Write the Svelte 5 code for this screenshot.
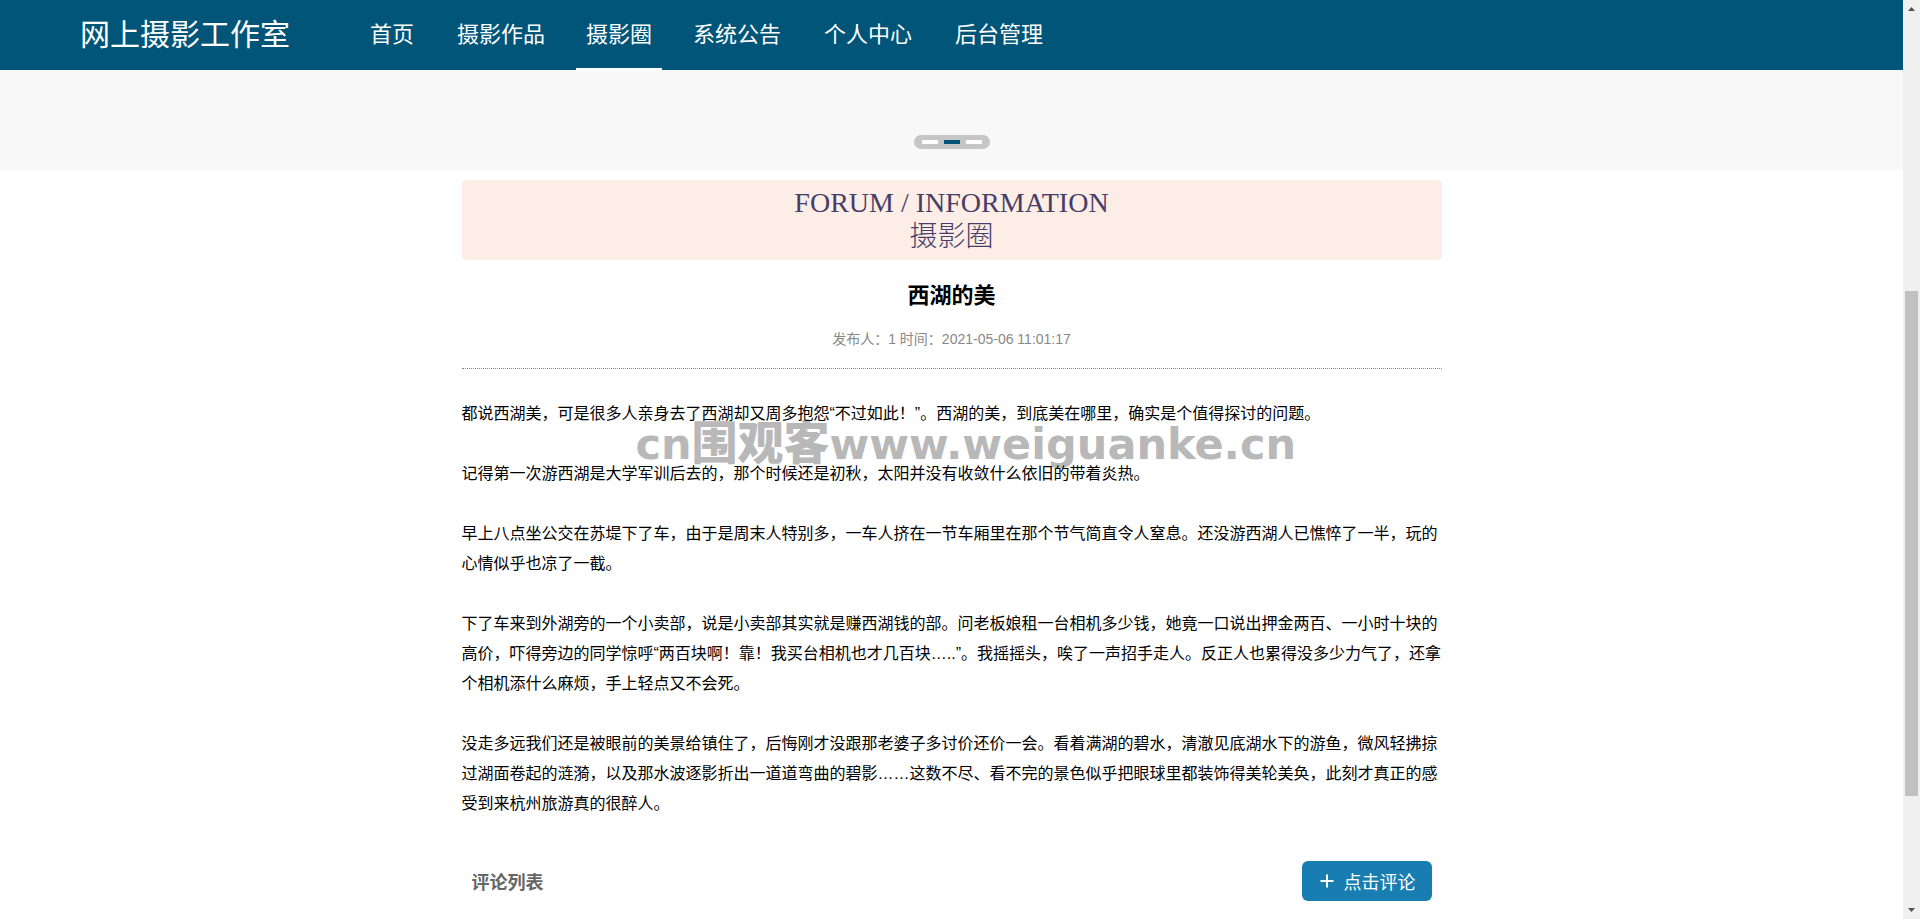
<script>
  const nav = ['首页', '摄影作品', '摄影圈', '系统公告', '个人中心', '后台管理'];
  const current = '摄影圈';
  const slides = [0, 1, 2];
  let slide = $state(1);
  const paragraphs = [
    '都说西湖美，可是很多人亲身去了西湖却又周多抱怨“不过如此！”。西湖的美，到底美在哪里，确实是个值得探讨的问题。',
    '记得第一次游西湖是大学军训后去的，那个时候还是初秋，太阳并没有收敛什么依旧的带着炎热。',
    '早上八点坐公交在苏堤下了车，由于是周末人特别多，一车人挤在一节车厢里在那个节气简直令人窒息。还没游西湖人已憔悴了一半，玩的心情似乎也凉了一截。',
    '下了车来到外湖旁的一个小卖部，说是小卖部其实就是赚西湖钱的部。问老板娘租一台相机多少钱，她竟一口说出押金两百、一小时十块的高价，吓得旁边的同学惊呼“两百块啊！靠！我买台相机也才几百块…..”。我摇摇头，唉了一声招手走人。反正人也累得没多少力气了，还拿个相机添什么麻烦，手上轻点又不会死。',
    '没走多远我们还是被眼前的美景给镇住了，后悔刚才没跟那老婆子多讨价还价一会。看着满湖的碧水，清澈见底湖水下的游鱼，微风轻拂掠过湖面卷起的涟漪，以及那水波逐影折出一道道弯曲的碧影……这数不尽、看不完的景色似乎把眼球里都装饰得美轮美奂，此刻才真正的感受到来杭州旅游真的很醉人。'
  ];
</script>

<div class="shell" lang="zh-CN">
  <div class="page">
    <header>
      <a class="brand" href="#home">网上摄影工作室</a>
      <nav>
        {#each nav as item}
          <a href="#{item}" class:active={item === current}>{item}</a>
        {/each}
      </nav>
    </header>

    <section class="carousel">
      <div class="dots">
        {#each slides as i}
          <button class:on={slide === i} aria-label="{i + 1}" onclick={() => (slide = i)}></button>
        {/each}
      </div>
    </section>

    <main>
      <div class="banner">
        <span>FORUM / INFORMATION</span>
        <span class="zh">摄影圈</span>
      </div>
      <article>
        <h1>西湖的美</h1>
        <p class="meta">发布人：1 时间：2021-05-06 11:01:17</p>
        <div class="body">
          {#each paragraphs as text}
            <p>{text}</p>
          {/each}
          <div class="watermark">cn<span>围观客</span>www.weiguanke.cn</div>
        </div>
      </article>
      <div class="comments">
        <h2>评论列表</h2>
        <button class="add">
          <svg viewBox="0 0 14 14" width="14" height="14" aria-hidden="true"><path d="M7 0.500v13M0.500 7h13" stroke="#fff" stroke-width="2" /></svg>
          点击评论
        </button>
      </div>
    </main>
  </div>

  <div class="scrollbar" aria-hidden="true">
    <svg viewBox="0 0 17 17" width="17" height="17"><path d="M5 11h7L8.500 7z" fill="#505050" /></svg>
    <div class="track"><div class="thumb"></div></div>
    <svg viewBox="0 0 17 17" width="17" height="17"><path d="M5 6h7L8.500 10z" fill="#505050" /></svg>
  </div>
</div>

<style>
  :global(body) {
    margin: 0;
    background: #fff;
  }
  .shell {
    display: flex;
    height: 100vh;
    overflow: hidden;
    font-family: "Liberation Sans", "Noto Sans CJK SC", sans-serif;
    color: #000;
  }
  .page {
    flex: 1;
    min-width: 0;
    overflow: hidden;
  }
  header {
    display: flex;
    gap: 68px;
    height: 70px;
    padding-left: 80px;
    background: #005578;
    line-height: 70px;
  }
  a {
    color: #fff;
    text-decoration: none;
    white-space: nowrap;
  }
  .brand {
    font-size: 30px;
  }
  nav {
    display: flex;
    gap: 19px;
    font-size: 22px;
  }
  nav a {
    padding: 0 12px;
  }
  nav a.active {
    position: relative;
    padding: 0 10px;
  }
  nav a.active::after {
    content: "";
    position: absolute;
    inset: auto 0 -1px;
    height: 3px;
    background: #fff;
  }
  .carousel {
    display: flex;
    justify-content: center;
    align-items: flex-end;
    height: 100px;
    padding-bottom: 21px;
    box-sizing: border-box;
    background: #f8f8f8;
  }
  .dots {
    display: flex;
    gap: 6px;
    padding: 5px 8px;
    border-radius: 7px;
    background: #c6c6c6;
  }
  .dots button {
    width: 16px;
    height: 4px;
    padding: 0;
    border: 0;
    background: #fff;
  }
  .dots button.on {
    background: #005578;
  }
  main {
    max-width: 980px;
    margin: 10px auto 0;
  }
  .banner {
    display: flex;
    flex-direction: column;
    align-items: center;
    justify-content: center;
    height: 80px;
    border-radius: 4px;
    background: #fceee6;
    color: #483d68;
    font-family: "Liberation Serif", "Noto Sans CJK SC", serif;
    font-size: 28px;
    line-height: 34px;
  }
  .zh {
    font-weight: 300;
  }
  h1 {
    margin: 20px 0 0;
    font-size: 22px;
    line-height: 32px;
    text-align: center;
  }
  .meta {
    margin: 0;
    padding: 16px 0 18px;
    border-bottom: 1px dotted #888;
    color: #888;
    font-size: 14px;
    line-height: 22px;
    text-align: center;
  }
  .body {
    position: relative;
    padding-top: 30px;
    font-size: 16px;
    line-height: 30px;
  }
  .body p {
    margin: 0 0 30px;
  }
  .watermark {
    position: absolute;
    top: 40px;
    left: 174px;
    z-index: -1;
    color: #b8b8b8;
    font-family: "DejaVu Sans", "Noto Sans CJK SC", sans-serif;
    font-size: 43px;
    font-weight: 700;
    line-height: 60px;
    white-space: nowrap;
  }
  .watermark span {
    font-family: "Noto Sans CJK SC", sans-serif;
    font-size: 46px;
    font-weight: 900;
  }
  .comments {
    display: flex;
    justify-content: space-between;
    align-items: center;
    padding: 12px 10px;
  }
  h2 {
    margin: 0;
    color: #666;
    font-size: 18px;
  }
  .add {
    display: flex;
    align-items: center;
    gap: 10px;
    height: 40px;
    padding: 0 16px 0 18px;
    border: 0;
    border-radius: 6px;
    background: #187eb2;
    color: #fff;
    font-family: inherit;
    font-size: 18px;
  }
  .scrollbar {
    display: flex;
    flex-direction: column;
    width: 17px;
    background: #f0f0f0;
  }
  .scrollbar svg {
    flex: none;
  }
  .track {
    display: grid;
    flex: 1;
    grid-template-rows: 274fr 505fr 106fr;
  }
  .thumb {
    grid-row: 2;
    margin: 0 2px;
    background: #c1c1c1;
  }
</style>
